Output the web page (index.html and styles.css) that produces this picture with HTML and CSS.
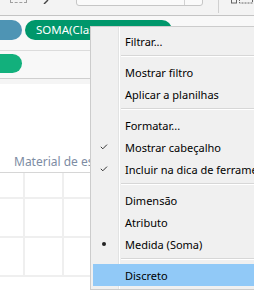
FILE: index.html
```html
<!DOCTYPE html>
<html lang="pt-BR">
<head>
    <meta charset="UTF-8">
    <meta name="viewport" content="width=device-width, initial-scale=1.0">
    <title>Planilha</title>
    <link rel="stylesheet" href="styles.css">
</head>
<body>
    <div class="app">
        <div class="toolbar">
            <span class="tb-frame"></span>
            <svg class="tb-pen" width="6" height="4" viewBox="0 0 6 4"><path d="M5 0 L1 4" stroke="#444" stroke-width="1.4"/></svg>
            <div class="tb-search"><span class="tb-search-btn"></span></div>
            <span class="tb-divider"></span>
            <svg class="tb-grid" width="24" height="4" viewBox="0 0 24 4">
                <rect x="0.5" y="-2" width="5" height="5" fill="none" stroke="#666"/>
                <rect x="8.5" y="-2" width="13" height="5" fill="none" stroke="#666" stroke-dasharray="2 1"/>
            </svg>
        </div>

        <div class="shelf shelf-cols">
            <span class="pill pill-blue"></span>
            <span class="pill pill-green">SOMA(Classificação)</span>
        </div>
        <div class="shelf shelf-rows">
            <span class="pill pill-lightgreen"></span>
        </div>

        <div class="view">
            <div class="view-header">
                <span class="axis-label">Material de escritório</span>
            </div>
            <div class="view-grid">
                <span></span><span></span><span></span><span></span><span></span><span></span>
                <span></span><span></span><span></span><span></span><span></span><span></span>
                <span></span><span></span><span></span><span></span><span></span><span></span>
            </div>
        </div>

        <ul class="menu">
            <li class="menu-item"><span class="mark"></span><span class="label">Filtrar...</span></li>
            <li class="menu-sep"></li>
            <li class="menu-item"><span class="mark"></span><span class="label">Mostrar filtro</span></li>
            <li class="menu-item"><span class="mark"></span><span class="label">Aplicar a planilhas</span></li>
            <li class="menu-sep"></li>
            <li class="menu-item"><span class="mark"></span><span class="label">Formatar...</span></li>
            <li class="menu-item">
                <span class="mark"><svg width="8" height="6" viewBox="0 0 8 6"><path d="M0.8 2.8 L2.8 4.8 L7 0.6" fill="none" stroke="#333" stroke-width="1"/></svg></span>
                <span class="label">Mostrar cabeçalho</span>
            </li>
            <li class="menu-item">
                <span class="mark"><svg width="8" height="6" viewBox="0 0 8 6"><path d="M0.8 2.8 L2.8 4.8 L7 0.6" fill="none" stroke="#333" stroke-width="1"/></svg></span>
                <span class="label">Incluir na dica de ferramenta</span>
            </li>
            <li class="menu-sep"></li>
            <li class="menu-item"><span class="mark"></span><span class="label">Dimensão</span></li>
            <li class="menu-item"><span class="mark"></span><span class="label">Atributo</span></li>
            <li class="menu-item"><span class="mark"><span class="bullet"></span></span><span class="label">Medida (Soma)</span></li>
            <li class="menu-sep"></li>
            <li class="menu-item active"><span class="mark"></span><span class="label">Discreto</span></li>
        </ul>
    </div>
</body>
</html>
```

FILE: styles.css
```css
body {
    margin: 0;
    font-family: "Noto Sans", "Liberation Sans", sans-serif;
    background: #fff;
    overflow: hidden;
}

.app {
    position: relative;
    width: 254px;
    height: 290px;
    overflow: hidden;
    background: #f5f5f5;
}

/* toolbar, only its lower edge is in view */
.toolbar {
    display: flex;
    align-items: flex-start;
    height: 15px;
    border-bottom: 1px solid #c4c4c4;
    overflow: hidden;
    background: #f3f3f3;
}

.tb-frame {
    margin-left: 10px;
    margin-top: -10px;
    width: 15px;
    height: 11px;
    border: 1px dashed #a0a0a0;
    flex-shrink: 0;
}

.tb-pen {
    margin-left: 16px;
    flex-shrink: 0;
}

.tb-search {
    margin-left: 27px;
    margin-top: -14px;
    width: 125px;
    height: 18px;
    border: 1px solid #c6c6c6;
    border-radius: 3px;
    background: #fafafa;
    display: flex;
    justify-content: flex-end;
    flex-shrink: 0;
}

.tb-search-btn {
    width: 17px;
    border-left: 1px solid #d2d2d2;
}

.tb-divider {
    margin-left: 15px;
    width: 1px;
    height: 13px;
    background: #d0d0d0;
    flex-shrink: 0;
}

.tb-grid {
    margin-left: 12px;
    flex-shrink: 0;
}

/* shelves */
.shelf {
    display: flex;
    align-items: flex-start;
    gap: 3px;
    background: #f8f8f8;
}

.shelf-cols {
    height: 30px;
    padding-top: 4px;
    border-bottom: 1px solid #dcdcdc;
}

.shelf-rows {
    height: 24px;
    padding-top: 3px;
    border-bottom: 1px solid #cfcfcf;
}

.pill {
    display: block;
    flex-shrink: 0;
    height: 20px;
    border-radius: 10px;
    color: #fff;
    font-size: 11.5px;
    line-height: 20px;
    white-space: nowrap;
    overflow: hidden;
}

.pill-blue {
    width: 40px;
    margin-left: -18px;
    background: #4e94b4;
}

.pill-green {
    width: 136px;
    padding-left: 11px;
    background: #00976b;
}

.pill-lightgreen {
    width: 40px;
    height: 19px;
    margin-left: -18px;
    background: #12b07c;
}

/* view */
.view {
    margin-top: 5px;
    background: #fff;
    height: 206px;
}

.view-header {
    height: 86px;
    padding-bottom: 2px;
    display: flex;
    align-items: flex-end;
    border-bottom: 1px solid #d6d6d6;
}

.axis-label {
    margin-left: 14px;
    font-size: 12px;
    line-height: 16px;
    color: #7d8ca3;
    white-space: nowrap;
}

.view-grid {
    display: grid;
    grid-template-columns: 25px repeat(5, 39px);
    grid-template-rows: 26px repeat(2, 39px);
}

.view-grid span {
    border-right: 2px solid #efefef;
    border-bottom: 2px solid #efefef;
}

/* context menu */
.menu {
    position: absolute;
    left: 90px;
    top: 26px;
    width: 200px;
    margin: 0;
    padding: 3px 2px;
    list-style: none;
    border: 1px solid #cccccc;
    background-color: #f0f0f0;
    background-image: linear-gradient(to right, transparent 27px, #e2e3e3 27px, #e2e3e3 28px, #fff 28px, #fff 29px, transparent 29px);
    font-size: 11px;
    color: #000;
}

.menu-item {
    display: flex;
    align-items: center;
    height: 22px;
    white-space: nowrap;
}

.menu-item.active {
    background: #91c9f7;
}

.mark {
    width: 22px;
    display: flex;
    justify-content: center;
    align-items: center;
}

.bullet {
    width: 4px;
    height: 4px;
    border-radius: 50%;
    background: #222;
}

.label {
    padding-left: 10px;
}

.menu-sep {
    height: 9px;
    margin-left: 28px;
    background: linear-gradient(#f0f0f0 3px, #d7d7d7 3px, #d7d7d7 4px, #fff 4px, #fff 5px, #f0f0f0 5px);
}
```
